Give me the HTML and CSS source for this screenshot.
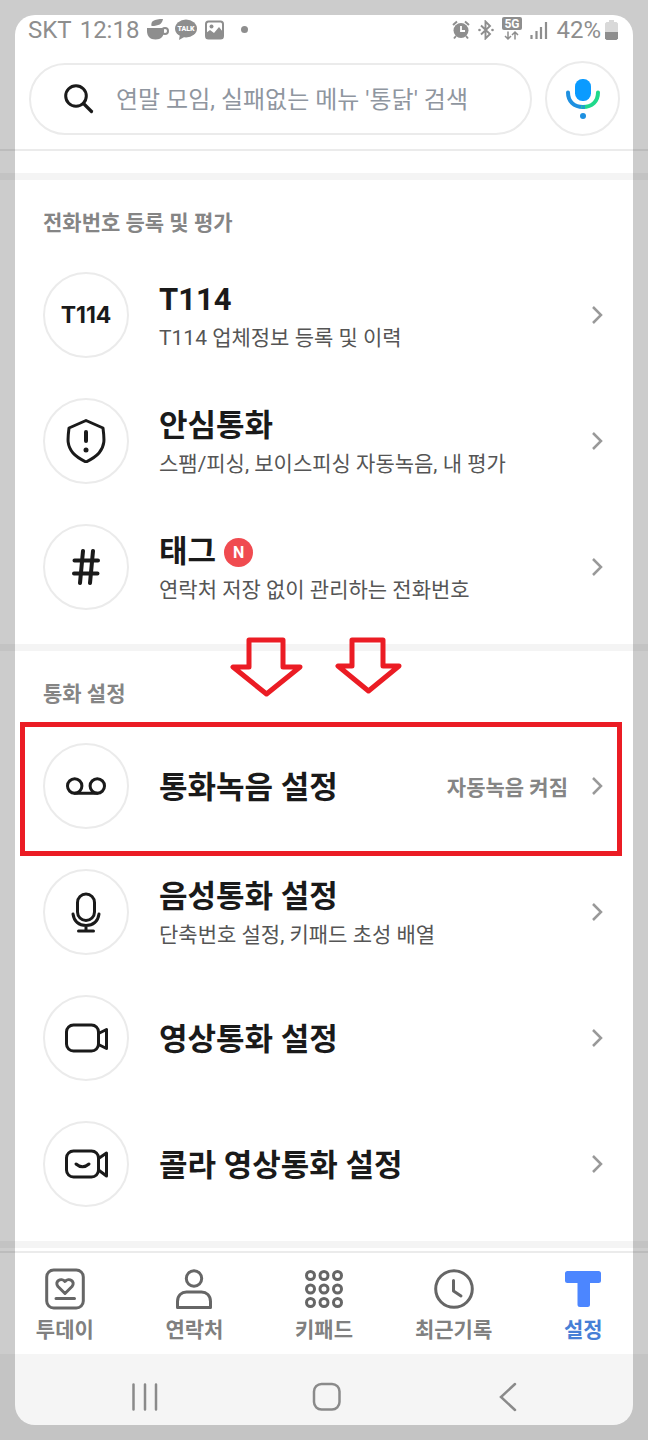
FILE: index.html
```html
<!DOCTYPE html>
<html lang="ko">
<head>
<meta charset="utf-8">
<meta name="viewport" content="width=device-width, initial-scale=1">
<title>T전화 설정</title>
<link rel="stylesheet" href="styles.css">
</head>
<body>
<div class="phone">
  <header class="top">
    <div class="status">
      <div class="status-side">
        <span>SKT</span>
        <span class="clock">12:18</span>
        <svg class="status-icon" width="22" height="22" viewBox="0 0 22 22"><path d="M0 9h17v3c0 5-3 8.500-8.500 8.500S0 17 0 12z" fill="currentColor"/><circle cx="18" cy="12" r="3" fill="none" stroke="currentColor" stroke-width="2"/><path d="M4.500 7C3.500 2 7 0 16 0c-1 5-4 7-11.500 7z" fill="currentColor"/></svg>
        <svg class="status-icon" width="22" height="22" viewBox="0 0 22 22"><ellipse cx="11" cy="9.500" rx="11" ry="9" fill="currentColor"/><path d="M5 15l-1 6 7-4z" fill="currentColor"/><text class="talk" x="11" y="12" text-anchor="middle">TALK</text></svg>
        <svg class="status-icon picture" width="19" height="20" viewBox="0 0 19 20"><rect x="1" y="1.500" width="17" height="17" rx="2.500" fill="none" stroke="currentColor" stroke-width="2"/><circle cx="6.500" cy="6.500" r="2" fill="currentColor"/><path d="M1 13l4-3 4 3 5-6 4 5v7H1z" fill="currentColor"/></svg>
        <span class="dot"></span>
      </div>
      <div class="status-side">
        <svg width="18" height="20" viewBox="0 0 18 20"><circle cx="9" cy="10.500" r="7.500" fill="currentColor"/><path d="M1 5l4-3.500M17 5l-4-3.500M4 16l-2 2.500M14 16l2 2.500" stroke="currentColor" stroke-width="2"/><path d="M9 6v5h4" fill="none" stroke="#fff" stroke-width="1.800"/></svg>
        <svg class="bluetooth" width="16" height="20" viewBox="0 0 16 20"><path d="M3 5.500l9 8.500-4.500 4.500v-17L12 6l-9 8.500" fill="none" stroke="currentColor" stroke-width="1.900"/><circle cx="1.500" cy="10" r="1.300" fill="currentColor"/><circle cx="14.500" cy="10" r="1.300" fill="currentColor"/></svg>
        <svg class="network" width="20" height="24" viewBox="0 0 20 24"><rect width="20" height="13" rx="2" fill="currentColor"/><text class="five-g" x="10" y="11" text-anchor="middle">5G</text><path d="M6 14.500v7.500M3 19l3 3 3-3M13 22.500v-7.500M10 18l3-3 3 3" fill="none" stroke="currentColor" stroke-width="1.500"/></svg>
        <svg class="signal" width="18" height="20" viewBox="0 0 18 20"><path d="M1.500 15v4M6.500 11v8M11 7v12M16 2v17" stroke="currentColor" stroke-width="2.200"/></svg>
        <span>42%</span>
        <svg class="battery" width="13" height="20" viewBox="0 0 13 20"><path d="M4 0h5v2h2.500L13 3.500V12H0V3.500L1.500 2H4z" fill="#d9d9d9"/><path d="M0 12h13v6.500L11.500 20h-10L0 18.500z" fill="currentColor"/></svg>
      </div>
    </div>
    <form class="search-row">
      <div class="search">
        <svg width="30" height="30" viewBox="0 0 30 30"><circle cx="12" cy="12" r="10.300" fill="none" stroke="#1a1a1a" stroke-width="3"/><path d="M19.500 19.500l8 8" stroke="#1a1a1a" stroke-width="3.200" stroke-linecap="round"/></svg>
        <input class="search-input" type="text" aria-label="검색" placeholder="연말 모임, 실패없는 메뉴 '통닭' 검색">
      </div>
      <button class="voice" type="button" aria-label="음성 검색">
        <svg width="36" height="42" viewBox="0 0 36 42"><rect x="10" y="1" width="16" height="22" rx="7.500" fill="#0a9bff"/><path d="M3 14.500c0 9 6 14.500 15 14.500" fill="none" stroke="#1e90e0" stroke-width="4" stroke-linecap="round"/><path d="M33 14.500c0 9-6 14.500-15 14.500" fill="none" stroke="#20d98b" stroke-width="4" stroke-linecap="round"/><path d="M17 27h3v4h-3z" fill="#1ea3c8"/><circle cx="18" cy="38" r="3" fill="#1e90e0"/></svg>
      </button>
    </form>
  </header>

  <main class="content">
    <section class="group">
      <h2 class="group-title">전화번호 등록 및 평가</h2>
      <a class="row" href="#t114">
        <span class="circle"><span class="logo">T114</span></span>
        <span class="texts"><span class="name">T114</span><span class="desc">T114 업체정보 등록 및 이력</span></span>
        <svg class="chevron" width="12" height="20" viewBox="0 0 12 20"><path d="M2 2l8 8-8 8"/></svg>
      </a>
      <a class="row" href="#safe">
        <span class="circle"><svg class="icon" width="44" height="44" viewBox="0 0 44 44"><path d="M22 1.500l17 7.500c1.500 11.500 2 18-4 25-3.500 4-8 6.500-13 9-5-2.500-9.500-5-13-9C3 27 3.500 20.500 5 9z"/><path d="M22 13v9" stroke-width="4"/><circle cx="22" cy="31" r="2.500" fill="#1a1a1a" stroke="none"/></svg></span>
        <span class="texts"><span class="name">안심통화</span><span class="desc">스팸/피싱, 보이스피싱 자동녹음, 내 평가</span></span>
        <svg class="chevron" width="12" height="20" viewBox="0 0 12 20"><path d="M2 2l8 8-8 8"/></svg>
      </a>
      <a class="row" href="#tag">
        <span class="circle"><svg class="icon hash" width="28" height="36" viewBox="0 0 28 36"><path d="M11 2L8 34M21 2l-3 32M2.500 11.500h23.500M2 24.500h23.500"/></svg></span>
        <span class="texts"><span class="name">태그<span class="new">N</span></span><span class="desc">연락처 저장 없이 관리하는 전화번호</span></span>
        <svg class="chevron" width="12" height="20" viewBox="0 0 12 20"><path d="M2 2l8 8-8 8"/></svg>
      </a>
    </section>

    <section class="group">
      <svg class="arrows" width="172" height="60" viewBox="0 0 172 60"><path d="M19 3h34v27h17L36.500 57 3 30h16zM122 3h31v26h16l-30.500 25L108 29h14z" fill="#fff"/><path d="M19 7h34v7H19zM122 7h31v7h-31z" fill="#f4f4f4"/><path d="M19 3h34v27h17L36.500 57 3 30h16zM122 3h31v26h16l-30.500 25L108 29h14z" fill="none" stroke="#eb1c24" stroke-width="5" stroke-linejoin="round"/></svg>
      <h2 class="group-title">통화 설정</h2>
      <a class="row marked" href="#record">
        <span class="circle"><svg class="icon" width="40" height="20" viewBox="0 0 40 20"><circle cx="8.700" cy="10" r="7.200"/><circle cx="31.300" cy="10" r="7.200"/><path d="M8.700 17.200h22.600"/></svg></span>
        <span class="texts"><span class="name">통화녹음 설정</span></span>
        <span class="state">자동녹음 켜짐</span>
        <svg class="chevron" width="12" height="20" viewBox="0 0 12 20"><path d="M2 2l8 8-8 8"/></svg>
      </a>
      <a class="row" href="#voice">
        <span class="circle"><svg class="icon" width="30" height="42" viewBox="0 0 30 42"><rect x="6.500" y="3" width="17" height="26.500" rx="8.500"/><path d="M2 23c1 7.500 6 11.500 13 11.500S27 30.500 28 23M15 35v5M7.500 40h15"/></svg></span>
        <span class="texts"><span class="name">음성통화 설정</span><span class="desc">단축번호 설정, 키패드 초성 배열</span></span>
        <svg class="chevron" width="12" height="20" viewBox="0 0 12 20"><path d="M2 2l8 8-8 8"/></svg>
      </a>
      <a class="row" href="#video">
        <span class="circle"><svg class="icon" width="44" height="30" viewBox="0 0 44 30"><rect x="2.500" y="2" width="32" height="26" rx="7"/><path d="M34.500 10.500l8-4v19l-8-4"/></svg></span>
        <span class="texts"><span class="name">영상통화 설정</span></span>
        <svg class="chevron" width="12" height="20" viewBox="0 0 12 20"><path d="M2 2l8 8-8 8"/></svg>
      </a>
      <a class="row" href="#callar">
        <span class="circle"><svg class="icon" width="44" height="30" viewBox="0 0 44 30"><rect x="2.500" y="2" width="32" height="26" rx="7"/><path d="M34.500 9.500l8-5.500v23l-8-6M12 15c4 3.500 9 3.500 13 0"/></svg></span>
        <span class="texts"><span class="name">콜라 영상통화 설정</span></span>
        <svg class="chevron" width="12" height="20" viewBox="0 0 12 20"><path d="M2 2l8 8-8 8"/></svg>
      </a>
    </section>
  </main>

  <nav class="tabs">
    <a class="tab" href="#today"><svg class="tab-icon" width="40" height="42" viewBox="0 0 40 42"><rect x="1.700" y="2" width="36.600" height="38" rx="7"/><path d="M20 25.500l-7-7c-4-5 3-9.500 7-5 4-4.500 11 0 7 5zM11 30.500h18.500"/></svg>투데이</a>
    <a class="tab" href="#contacts"><svg class="tab-icon" width="40" height="42" viewBox="0 0 40 42"><circle cx="20" cy="10.500" r="7.700"/><path d="M3.500 39.500v-6c0-6 4-9.500 9-9.500h15c5 0 9 3.500 9 9.500v6z"/></svg>연락처</a>
    <a class="tab" href="#keypad"><svg class="tab-icon" width="40" height="42" viewBox="0 0 40 42"><circle cx="6.500" cy="7.500" r="4"/><circle cx="20" cy="7.500" r="4"/><circle cx="33.500" cy="7.500" r="4"/><circle cx="6.500" cy="21" r="4"/><circle cx="20" cy="21" r="4"/><circle cx="33.500" cy="21" r="4"/><circle cx="6.500" cy="34.500" r="4"/><circle cx="20" cy="34.500" r="4"/><circle cx="33.500" cy="34.500" r="4"/></svg>키패드</a>
    <a class="tab" href="#recent"><svg class="tab-icon" width="40" height="42" viewBox="0 0 40 42"><circle cx="20" cy="21" r="18.300"/><path d="M19.500 12.500V23l7.500 5"/></svg>최근기록</a>
    <a class="tab current" href="#settings" aria-current="page"><svg width="40" height="42" viewBox="0 0 40 42"><path d="M4.500 3h31q2.500 0 2.500 2.500v7q0 2.500-2.500 2.500H27v21.500q0 2.500-2.500 2.500h-7.500q-2.500 0-2.500-2.500V15H4.500Q2 15 2 12.500v-7Q2 3 4.500 3z" fill="#4c86ff"/></svg>설정</a>
  </nav>

  <div class="system">
    <button class="key" type="button" aria-label="최근 앱"><svg width="30" height="30" viewBox="0 0 30 30"><path d="M3.500 2.500v25M15 2.500v25M26 2.500v25"/></svg></button>
    <button class="key" type="button" aria-label="홈"><svg width="30" height="30" viewBox="0 0 30 30"><rect x="2" y="2" width="25.500" height="25.500" rx="7.500"/></svg></button>
    <button class="key" type="button" aria-label="뒤로"><svg width="30" height="30" viewBox="0 0 30 30"><path d="M21 2L7 15l14 13"/></svg></button>
  </div>
</div>
</body>
</html>
```
FILE: styles.css
```css
* {
  box-sizing: border-box;
}

body {
  margin: 0;
  background: #fff;
  color: #1a1a1a;
  font-family: Roboto, "Noto Sans CJK KR", sans-serif;
}

a {
  color: inherit;
  text-decoration: none;
}

svg {
  display: block;
  flex: none;
}

.phone {
  position: relative;
  display: flex;
  flex-direction: column;
  min-height: 100vh;
  overflow: hidden;
}

/* Translucent frame with a rounded opening over the whole screen */
.phone::after {
  content: "";
  position: absolute;
  inset: 15px;
  border-radius: 20px;
  box-shadow: 0 0 0 30px rgba(0, 0, 0, 0.2);
  pointer-events: none;
}

.top {
  padding-bottom: 13px;
  border-bottom: 2px solid #ebebeb;
}

.status {
  display: flex;
  justify-content: space-between;
  align-items: center;
  height: 61px;
  padding: 0 30px 2px 28px;
  color: #8e8e8e;
  font-size: 24px;
  line-height: 28px;
}

.status-side {
  display: flex;
  align-items: center;
}

.clock {
  margin-left: 8px;
}

.status-icon {
  margin-left: 6px;
}

.clock + .status-icon {
  margin-left: 8px;
}

.picture {
  margin-left: 8px;
}

.talk {
  fill: #fff;
  font-size: 7px;
  font-weight: 900;
}

.five-g {
  fill: #fff;
  font-size: 12px;
  font-weight: 700;
}

.dot {
  width: 7px;
  height: 7px;
  margin-left: 17px;
  border-radius: 50%;
  background: #8e8e8e;
}

.bluetooth,
.signal {
  margin: 0 8px;
}

.network {
  margin-bottom: 2px;
}

.battery {
  margin-left: 4px;
}

.search-row {
  display: flex;
  align-items: center;
  gap: 13px;
  padding: 0 28px 0 29px;
}

.search {
  display: flex;
  flex: 1;
  align-items: center;
  gap: 22px;
  min-width: 0;
  height: 72px;
  padding: 0 33px;
  border: 2px solid #ebebeb;
  border-radius: 36px;
}

.search-input {
  flex: 1;
  min-width: 0;
  padding: 2px 0 0;
  border: 0;
  outline: 0;
  background: none;
  font: inherit;
  font-size: 24px;
}

.search-input::placeholder {
  color: #8f969f;
}

.voice {
  display: grid;
  place-items: center;
  width: 75px;
  height: 75px;
  padding: 0;
  border: 2px solid #ebebeb;
  border-radius: 50%;
  background: none;
}

.content {
  flex: 1;
  padding-top: 22px;
}

.group {
  position: relative;
  padding-bottom: 14px;
  border-top: 7px solid #f4f4f4;
}

.group:last-child {
  border-bottom: 7px solid #f4f4f4;
}

.group-title {
  height: 72px;
  margin: 0;
  padding: 29px 43px 0;
  color: #858585;
  font-size: 21px;
  font-weight: 700;
  line-height: 28px;
}

.row {
  position: relative;
  display: flex;
  align-items: center;
  height: 126px;
  padding: 0 45px 0 43px;
}

.circle {
  display: grid;
  flex: none;
  place-items: center;
  width: 86px;
  height: 86px;
  border: 2px solid #ebebeb;
  border-radius: 50%;
}

.logo {
  font-family: Inter, sans-serif;
  font-size: 23px;
  font-weight: 700;
}

.icon {
  fill: none;
  stroke: #1a1a1a;
  stroke-width: 3;
  stroke-linecap: round;
  stroke-linejoin: round;
}

.hash {
  stroke-width: 4;
}

.texts {
  display: flex;
  flex: 1;
  flex-direction: column;
  gap: 2px;
  margin-left: 30px;
  padding-top: 4px;
}

.name {
  display: flex;
  align-items: center;
  gap: 8px;
  font-size: 31px;
  font-weight: 700;
  line-height: 40px;
}

.desc {
  color: #555;
  font-size: 21px;
  line-height: 32px;
}

.new {
  width: 29px;
  height: 29px;
  border-radius: 50%;
  background: #f04b50;
  color: #fff;
  font-size: 16px;
  line-height: 29px;
  text-align: center;
}

.state {
  margin-right: 23px;
  color: #858585;
  font-size: 21px;
  font-weight: 700;
}

.chevron {
  fill: none;
  stroke: #999;
  stroke-width: 2.5;
}

/* Red annotations drawn over the list */
.marked::before {
  content: "";
  position: absolute;
  inset: -1px 26px -7px 20px;
  border: 5px solid #eb1c24;
}

.arrows {
  position: absolute;
  top: -14px;
  left: 230px;
}

.tabs {
  display: grid;
  grid-template-columns: repeat(5, 1fr);
  height: 103px;
  margin-top: 3px;
  border-top: 2px solid #ebebeb;
}

.tab {
  display: flex;
  flex-direction: column;
  align-items: center;
  gap: 6px;
  padding-top: 15px;
  color: #808080;
  font-size: 21px;
  font-weight: 700;
  line-height: 28px;
}

.tab-icon {
  fill: none;
  stroke: #666;
  stroke-width: 3;
  stroke-linecap: round;
  stroke-linejoin: round;
}

.current {
  color: #477fd6;
}

.system {
  display: grid;
  grid-template-columns: repeat(3, 1fr);
  height: 86px;
  padding: 0 48px 0 54px;
  background: #f5f5f5;
}

.key {
  display: grid;
  place-items: center;
  padding: 0;
  border: 0;
  background: none;
}

.key svg {
  fill: none;
  stroke: #8a8a8a;
  stroke-width: 2.5;
  stroke-linecap: round;
}
```
